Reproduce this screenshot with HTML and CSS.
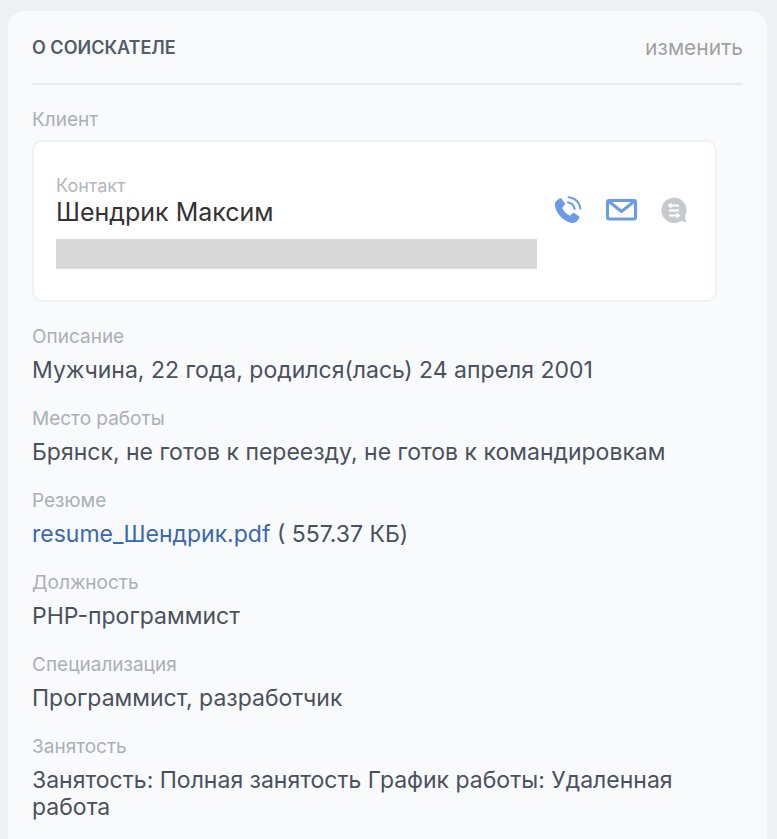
FILE: index.html
```html
<!DOCTYPE html>
<html lang="ru">

<head>
  <meta charset="UTF-8">
  <meta name="viewport" content="width=device-width, initial-scale=1.0">
  <title>О соискателе</title>
  <link rel="stylesheet" href="styles.css">
</head>

<body>
  <section class="panel">
    <header class="panel-header">
      <h1 class="panel-title">О соискателе</h1>
      <button type="button" class="edit-button">изменить</button>
    </header>

    <dl class="fields">
      <div class="field">
        <dt class="field-label">Клиент</dt>
        <dd class="client-card">
          <div class="client-info">
            <span class="client-type">Контакт</span>
            <span class="client-name">Шендрик Максим</span>
            <div class="client-placeholder"></div>
          </div>
          <div class="client-actions">
            <button type="button" class="icon-button" aria-label="Позвонить">
              <svg width="28" height="28" viewBox="0 0 28 28" fill="none">
                <path d="M5.5 2.6 C6.4 1.900 7.3 2.1 7.9 2.900 L10.6 7 C11.200 7.9 11 8.900 10.200 9.600 L8.800 10.900 C8.300 11.400 8.200 12 8.600 12.800 C10.200 15.500 12.200 17.600 15 19.300 C15.700 19.700 16.300 19.600 16.800 19 L18 17.600 C18.700 16.800 19.700 16.700 20.600 17.300 L24.600 20 C25.500 20.600 25.700 21.600 25 22.500 C23.300 25.200 21.400 27.400 18 27 C9.500 26 1.500 16.500 0.800 9 C0.600 6.200 3.200 4.200 5.500 2.600 Z" fill="#6c9be6" />
                <path d="M14 6.500 C17.600 7 20 9.300 20.700 13" stroke="#6c9be6" stroke-width="2" stroke-linecap="round" />
                <path d="M14.500 1.200 C21 1.700 25.600 6.200 26.300 12.600" stroke="#6c9be6" stroke-width="2" stroke-linecap="round" />
              </svg>
            </button>
            <button type="button" class="icon-button" aria-label="Написать письмо">
              <svg width="31" height="22" viewBox="0 0 31 22" fill="none" stroke="#6c9be6" stroke-width="3" stroke-linejoin="round">
                <rect x="1.500" y="1.500" width="28" height="18.500" rx="1.500" />
                <path d="M3 2.500 L15.500 12.500 L28 2.500" />
              </svg>
            </button>
            <button type="button" class="icon-button" aria-label="Открыть чат">
              <svg width="26" height="27" viewBox="0 0 26 27" fill="none">
                <path d="M13 0.500 A12.800 12.800 0 1 0 20.500 23.800 L25.300 25.800 L24 19.500 A12.800 12.800 0 0 0 13 0.500 Z" fill="#c6cacf" />
                <path d="M8 8.500 H18 M8 13.500 H18 M8 18.500 H18" stroke="#fff" stroke-width="2" />
                <path d="M10.500 5.500 L6.500 8.500 L10.500 11.500 Z M15.500 15.500 L19.500 18.500 L15.500 21.500 Z" fill="#fff" />
              </svg>
            </button>
          </div>
        </dd>
      </div>

      <div class="field">
        <dt class="field-label">Описание</dt>
        <dd class="field-value">Мужчина, 22 года, родился(лась) 24 апреля 2001</dd>
      </div>

      <div class="field">
        <dt class="field-label">Место работы</dt>
        <dd class="field-value">Брянск, не готов к переезду, не готов к командировкам</dd>
      </div>

      <div class="field">
        <dt class="field-label">Резюме</dt>
        <dd class="field-value"><a href="#" class="file-link">resume_Шендрик.pdf</a> ( 557.37 КБ)</dd>
      </div>

      <div class="field">
        <dt class="field-label">Должность</dt>
        <dd class="field-value">PHP-программист</dd>
      </div>

      <div class="field">
        <dt class="field-label">Специализация</dt>
        <dd class="field-value">Программист, разработчик</dd>
      </div>

      <div class="field">
        <dt class="field-label">Занятость</dt>
        <dd class="field-value">Занятость: Полная занятость График работы: Удаленная работа</dd>
      </div>
    </dl>
  </section>
</body>

</html>
```
FILE: styles.css
```css
* {
  margin: 0;
  padding: 0;
  box-sizing: border-box;
}

body {
  font-family: Inter, "Liberation Sans", sans-serif;
  background-color: #edf1f4;
  color: #4b515c;
  padding: 11px 10px 0 8px;
}

button {
  font: inherit;
  background: none;
  border: none;
  cursor: pointer;
}

.panel {
  min-height: calc(100vh - 11px);
  background-color: #f9fafc;
  border-radius: 16px 16px 0 0;
  padding: 0 24px 18px;
}

.panel-header {
  display: flex;
  align-items: center;
  justify-content: space-between;
  height: 74px;
  border-bottom: 2px solid #e9ebed;
}

.panel-title {
  font-size: 18px;
  font-weight: 600;
  text-transform: uppercase;
  color: #535c69;
}

.edit-button {
  font-size: 21px;
  color: #a0a1a1;
}

.fields {
  display: flex;
  flex-direction: column;
  gap: 24px;
  padding-top: 24px;
}

.field {
  display: flex;
  flex-direction: column;
  gap: 9px;
  padding-right: 26px;
}

.field-label {
  font-size: 19px;
  line-height: 22px;
  color: #abafb6;
}

.field-value {
  font-size: 23px;
  line-height: 27px;
}

.file-link {
  color: #3868b4;
  text-decoration: none;
}

.client-card {
  display: flex;
  justify-content: space-between;
  gap: 16px;
  background-color: #fff;
  border: 2px solid #f0f1f2;
  border-radius: 10px;
  padding: 33px 28px 31px 22px;
}

.client-info {
  display: flex;
  flex-direction: column;
  flex: 1;
  max-width: 481px;
}

.client-type {
  font-size: 18px;
  line-height: 22px;
  color: #b3b6bd;
}

.client-name {
  font-size: 25px;
  line-height: 30px;
  color: #333;
}

.client-placeholder {
  height: 30px;
  margin-top: 12px;
  background-color: #d8d8d8;
}

.client-actions {
  display: flex;
  align-items: center;
  gap: 24px;
  height: 70px;
}

.icon-button {
  display: flex;
}
```
